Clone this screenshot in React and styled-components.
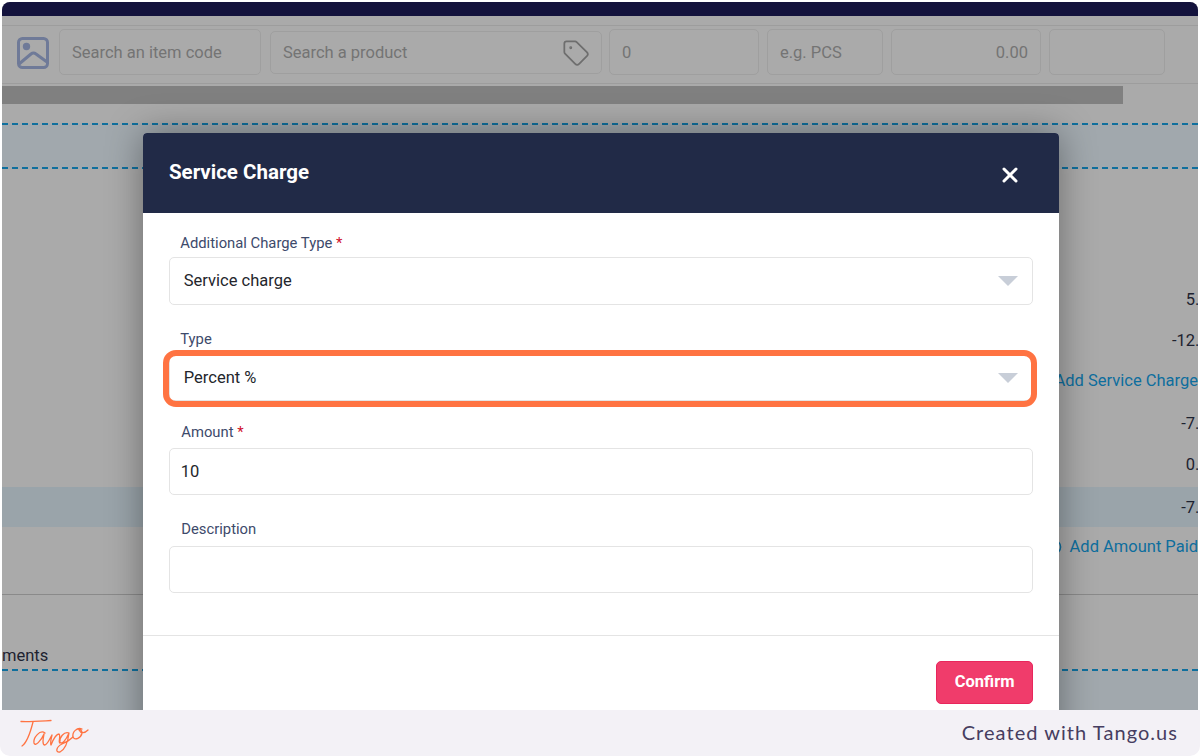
import React from "react";
import styled, { createGlobalStyle } from "styled-components";
import { CirclePlus, Tag, X } from "lucide-react";

const GlobalStyle = createGlobalStyle`
  html, body {
    margin: 0;
    padding: 0;
    background: #fff;
    font-family: Roboto, "Liberation Sans", sans-serif;
  }
`;

const Page = styled.div`
  width: 1200px;
  height: 756px;
  overflow: hidden;
  display: flex;
  flex-direction: column;
  padding-top: 2px;
  box-sizing: border-box;
`;

const Frame = styled.div`
  position: relative;
  height: 708px;
  margin: 0 2px;
  overflow: hidden;
  border-radius: 8px 8px 0 0;
  background: #aaaaaa;
`;

const TopBar = styled.div`
  height: 14px;
  background: #14133d;
`;

const Toolbar = styled.div`
  height: 59px;
  margin-top: 9px;
  padding: 3px 0 0 15px;
  box-sizing: border-box;
  display: flex;
  align-items: flex-start;
  border-top: 1px solid #9d9d9d;
  border-bottom: 1px solid #9d9d9d;
`;

const ImageIcon = styled.svg`
  width: 32px;
  height: 32px;
  flex: none;
  margin: 8px 10px 0 0;
`;

const ToolInput = styled.div`
  width: ${(p) => p.$width}px;
  height: ${(p) => p.$height || 46}px;
  margin-top: ${(p) => (p.$height ? 2 : 0)}px;
  margin-right: ${(p) => p.$gap}px;
  padding: 0 12px;
  box-sizing: border-box;
  flex: none;
  display: flex;
  align-items: center;
  justify-content: ${(p) => (p.$right ? "flex-end" : "space-between")};
  border: 1.5px solid #9f9f9f;
  border-radius: 5px;
  color: #747474;
  font-size: 16.5px;
`;

const TagIcon = styled(Tag)`
  margin-right: -1px;
`;

const ScrollTrack = styled.div`
  height: 18px;
  margin-top: 2px;
  width: 1121px;
  background: #808080;
`;

const Band = styled.div`
  height: 42px;
  margin-top: 19px;
  border-top: 2px dashed #0f6f9d;
  border-bottom: 2px dashed #0f6f9d;
  background: #a1a8ad;
`;

const Summary = styled.div`
  height: 426px;
  padding-top: 110px;
  box-sizing: border-box;
  display: flex;
  flex-direction: column;
  border-bottom: 1px solid #8a8a8a;
`;

const SummaryRow = styled.div`
  height: ${(p) => p.$height}px;
  margin-bottom: ${(p) => p.$after || 0}px;
  display: flex;
  align-items: center;
  justify-content: flex-end;
  font-size: 16.5px;
  white-space: nowrap;
  color: ${(p) => (p.$link ? "#0e6e9e" : "#1d2230")};
  background: ${(p) => (p.$band ? "#9aa4aa" : "transparent")};
`;

const SummaryText = styled.span`
  display: flex;
  align-items: center;
  gap: 8px;
  margin-right: ${(p) => p.$clip}px;
`;

const Notes = styled.div`
  height: 76px;
  display: flex;
  align-items: flex-end;
  font-size: 16.5px;
  line-height: 20px;
  color: #1d2230;
  padding-bottom: 3px;
  box-sizing: border-box;
  border-bottom: 2px dashed #0f6f9d;
`;

const LowerBand = styled.div`
  height: 40px;
  background: #a1a8ad;
`;

const Modal = styled.div`
  position: absolute;
  left: 141.4px;
  top: 131px;
  width: 915.6px;
  height: 620px;
  background: #fff;
  border-radius: 4px;
  box-shadow: 0 0 36px rgba(0, 0, 0, 0.38);
`;

const ModalHeader = styled.div`
  height: 80px;
  padding: 0 37px 0 25.6px;
  display: flex;
  align-items: center;
  justify-content: space-between;
  background: #212a47;
  border-radius: 4px 4px 0 0;
  color: #fff;
`;

const ModalTitle = styled.h2`
  margin: 0 0 2px;
  font-size: 20.5px;
  font-weight: 700;
`;

const CloseIcon = styled(X)`
  margin-top: 4px;
`;

const ModalBody = styled.div`
  padding: 22px 25.7px 0 25.9px;
`;

const Field = styled.div`
  margin-top: ${(p) => p.$top || 0}px;
`;

const Label = styled.label`
  display: block;
  height: 16px;
  line-height: 16px;
  font-size: 14.8px;
  color: #3d4a6b;
  padding-left: ${(p) => p.$indent}px;
  margin-bottom: ${(p) => p.$space}px;
`;

const Required = styled.span`
  color: #d0102c;
`;

const Box = styled.div`
  position: relative;
  height: ${(p) => p.$height}px;
  padding: 0 14px ${(p) => p.$raise || 0}px ${(p) => p.$indent}px;
  box-sizing: border-box;
  display: flex;
  align-items: center;
  justify-content: space-between;
  border: 1.5px solid #e4e4e4;
  border-radius: 5px;
  color: #24262c;
  font-size: 16.5px;
`;

const Caret = styled.span`
  width: 0;
  height: 0;
  margin-top: 1px;
  border-left: 10px solid transparent;
  border-right: 10px solid transparent;
  border-top: 10px solid #c8ced8;
`;

const Highlight = styled.span`
  position: absolute;
  left: -7px;
  right: -5px;
  top: -4px;
  bottom: -7px;
  border: 6px solid #ff7342;
  border-radius: 13px;
  pointer-events: none;
`;

const ModalFooter = styled.div`
  margin-top: 42px;
  padding: 25px 25.7px 0;
  display: flex;
  justify-content: flex-end;
  border-top: 1.5px solid #e4e4e4;
`;

const ConfirmButton = styled.button`
  width: 97.4px;
  height: 43px;
  padding: 0 0 2px;
  border: 1px solid #e8265c;
  border-radius: 5px;
  background: #f03c6b;
  color: #fff;
  font-family: inherit;
  font-size: 16.5px;
  font-weight: 700;
`;

const Footer = styled.div`
  height: 46px;
  padding: 0 22px 0 14px;
  display: flex;
  align-items: center;
  justify-content: space-between;
  background: #f3f1f6;
  border-radius: 0 0 10px 10px;
`;

const TangoLogo = styled.svg`
  width: 84px;
  height: 40px;
  margin-top: 2px;
`;

const Credit = styled.span`
  margin-bottom: 3px;
  font-family: Lato, sans-serif;
  font-size: 20px;
  letter-spacing: 1.05px;
  color: #463d60;
`;

const summaryRows = [
  { text: "5.00", height: 41, clip: -20 },
  { text: "-12.00", height: 40, clip: -20 },
  { text: "Add Service Charge", height: 40, after: 2, link: true, clip: 0 },
  { text: "-7.00", height: 42, clip: -20 },
  { text: "0.00", height: 40, after: 3, clip: -20 },
  { text: "-7.00", height: 40, band: true, clip: -20 },
  { text: "Add Amount Paid", height: 39, link: true, clip: 0, icon: true },
];

const App = () => {
  return (
    <>
      <GlobalStyle />
      <Page>
        <Frame>
          <TopBar />
          <Toolbar>
            <ImageIcon viewBox="0 0 32 32" fill="none" stroke="#6f7a98" strokeWidth="3">
              <rect x="1.5" y="1.5" width="29" height="29" rx="4" />
              <circle cx="9.5" cy="9.5" r="2.2" fill="#6f7a98" />
              <path d="M2 27 L14 17 Q16.5 15 19 17 L30 25" />
            </ImageIcon>
            <ToolInput $width={202} $gap={9}>Search an item code</ToolInput>
            <ToolInput $width={332} $height={43} $gap={7}>
              Search a product
              <TagIcon size={28} color="#6e6e6e" strokeWidth={1.5} />
            </ToolInput>
            <ToolInput $width={150} $gap={8}>0</ToolInput>
            <ToolInput $width={116} $gap={8}>e.g. PCS</ToolInput>
            <ToolInput $width={150} $gap={8} $right>0.00</ToolInput>
            <ToolInput $width={116} $gap={0} />
          </Toolbar>
          <ScrollTrack />
          <Band />
          <Summary>
            {summaryRows.map((row, index) => (
              <SummaryRow
                key={index}
                $height={row.height}
                $after={row.after}
                $link={row.link}
                $band={row.band}
              >
                <SummaryText $clip={row.clip}>
                  {row.icon && <CirclePlus size={16} strokeWidth={2} />}
                  {row.text}
                </SummaryText>
              </SummaryRow>
            ))}
          </Summary>
          <Notes>ments</Notes>
          <LowerBand />
          <Modal>
            <ModalHeader>
              <ModalTitle>Service Charge</ModalTitle>
              <CloseIcon size={24} strokeWidth={3} color="#fff" />
            </ModalHeader>
            <ModalBody>
              <Field>
                <Label $indent={11} $space={6}>
                  Additional Charge Type <Required>*</Required>
                </Label>
                <Box $height={48} $indent={13.5} $raise={2}>
                  Service charge
                  <Caret />
                </Box>
              </Field>
              <Field $top={26}>
                <Label $indent={11} $space={6}>Type</Label>
                <Box $height={48} $indent={13.5}>
                  Percent %
                  <Caret />
                  <Highlight />
                </Box>
              </Field>
              <Field $top={23}>
                <Label $indent={12} $space={8}>
                  Amount <Required>*</Required>
                </Label>
                <Box $height={47} $indent={10.5}>10</Box>
              </Field>
              <Field $top={26}>
                <Label $indent={12} $space={9}>Description</Label>
                <Box $height={47} $indent={10.5} />
              </Field>
            </ModalBody>
            <ModalFooter>
              <ConfirmButton>Confirm</ConfirmButton>
            </ModalFooter>
          </Modal>
        </Frame>
        <Footer>
          <TangoLogo viewBox="0 0 84 40" fill="none" stroke="#ff7342" strokeWidth="1.3" strokeLinecap="round" strokeLinejoin="round">
            <path d="M7 7.5 C15 8 28 7 37 6.5" />
            <path d="M19 8 C17 16 14 28 8 32" />
            <path d="M31 19 C26 15 19 24 20 29 C21 33 27 27 30 20 C29 25 28 31 31 31 C34 30 36 24 38 21 C37 25 36 29 37 31 C39 26 42 20 45 20 C47 21 44 29 46 29" />
            <path d="M55 19 C50 17 45 24 46 28 C48 31 52 26 55 19 C54 27 52 35 46 38 C41 39 42 33 48 30 C53 28 56 26 59 23" />
            <path d="M68 15 C63 13 58 18 59 23 C61 27 67 24 68 19 C68 16 66 15 65 16 C67 20 71 19 74 16" />
          </TangoLogo>
          <Credit>Created with Tango.us</Credit>
        </Footer>
      </Page>
    </>
  );
};

export default App;
